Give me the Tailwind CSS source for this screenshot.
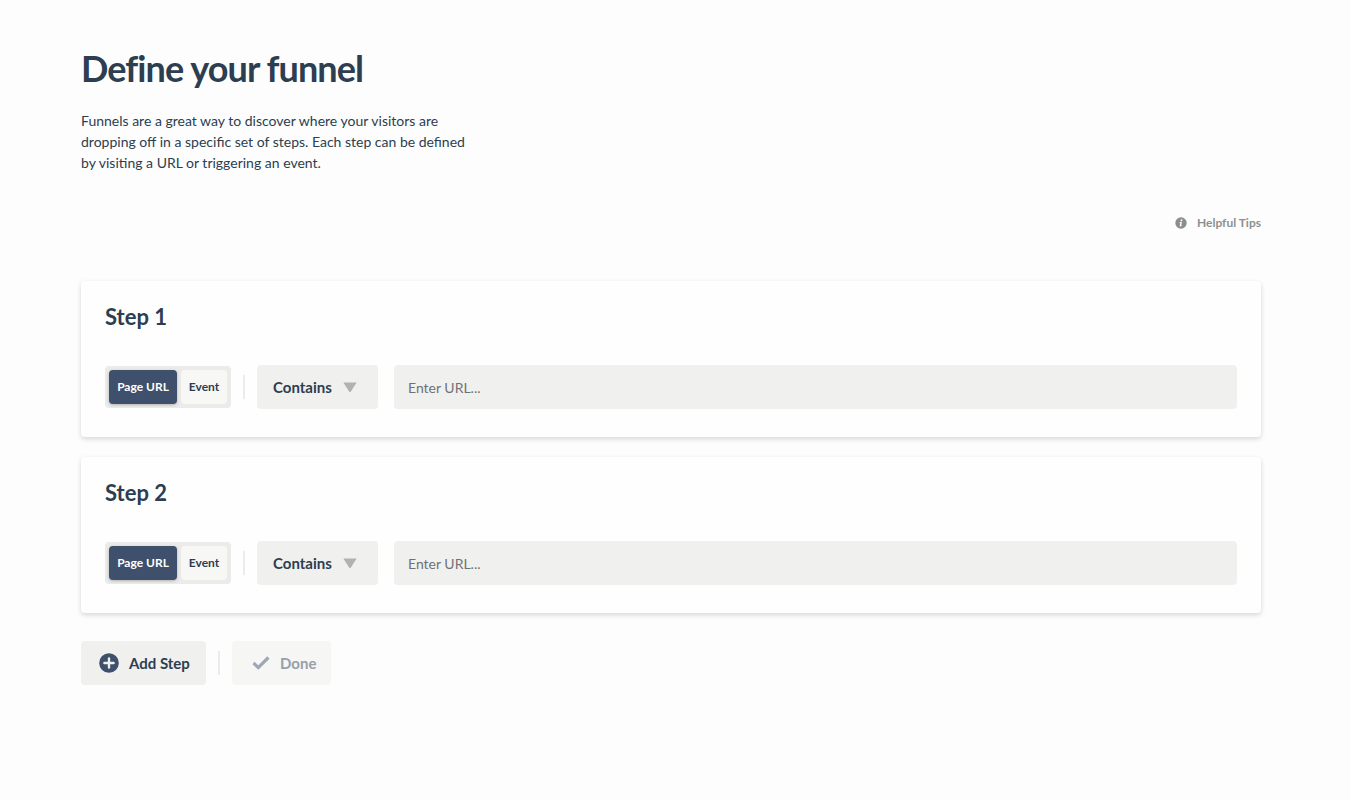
<!DOCTYPE html>
<html lang="en">
<head>
  <meta charset="UTF-8" />
  <meta name="viewport" content="width=device-width, initial-scale=1.0" />
  <title>Define your funnel</title>
  <script src="https://cdn.jsdelivr.net/npm/@tailwindcss/browser@4"></script>
</head>
<body class="bg-[#fdfdfd] text-[#2c3e50] min-h-screen font-['Lato',sans-serif]">

  <main class="pl-[81px] pr-[89px] pt-11 pb-16">

    <!-- Intro -->
    <header>
      <h1 class="text-[36px] leading-[48px] font-bold tracking-tight">Define your funnel</h1>
      <p class="mt-[18px] max-w-[410px] text-[14px] leading-[21px]">
        Funnels are a great way to discover where your visitors are<br>
        dropping off in a specific set of steps. Each step can be defined<br>
        by visiting a URL or triggering an event.
      </p>
    </header>

    <div class="mt-10 flex justify-end">
      <a href="#" class="flex items-center gap-[10px] text-[12px] leading-5 font-bold text-[#8c918f]">
        <svg class="w-3 h-3" viewBox="0 0 12 12" aria-hidden="true">
          <circle cx="6" cy="6" r="5.7" fill="#8a8f8d" />
          <circle cx="6.5" cy="3.2" r="1" fill="#fdfdfd" />
          <path d="M4.7 5h2.2L6.2 8.4h.7l-.2.9H4.6l.7-3.4h-.8z" fill="#fdfdfd" />
        </svg>
        Helpful Tips
      </a>
    </div>

    <!-- Steps -->
    <div class="mt-12 flex flex-col gap-5">
      <section class="bg-[#fefefe] rounded px-6 pt-5 pb-7 shadow-[0_2px_5px_rgba(0,0,0,0.16)]">
        <h2 class="text-[22px] leading-8 font-bold">Step 1</h2>
        <div class="mt-8 flex items-center">
          <div class="flex gap-1 p-1 rounded bg-[#ebebe9] text-[12px] font-bold" role="group" aria-label="Step 1 type">
            <button type="button" aria-pressed="true" class="w-[68px] h-[34px] rounded bg-[#3e506c] text-white shadow-[0_1px_3px_rgba(0,0,0,0.25)]">Page URL</button>
            <button type="button" aria-pressed="false" class="w-[46px] h-[34px] rounded bg-[#f7f7f6]">Event</button>
          </div>
          <div class="mx-3 w-0.5 h-6 bg-[#ebebe9]"></div>
          <div class="relative">
            <select aria-label="Step 1 match" class="appearance-none w-[121px] h-11 pl-4 rounded bg-[#f0f0ee] text-[15px] font-bold">
              <option>Contains</option>
              <option>Equals</option>
            </select>
            <svg class="absolute right-[21px] top-[17px] w-[14px] h-[11px] pointer-events-none" viewBox="0 0 14 11" aria-hidden="true">
              <path d="M1.2.5h11.6q.9 0 .4.8L7.9 9.6q-.9 1-1.8 0L.8 1.3Q.3.5 1.2.5z" fill="#b2b3b1" />
            </svg>
          </div>
          <input type="text" aria-label="Step 1 URL" placeholder="Enter URL..." class="ml-4 flex-1 min-w-0 h-11 px-[14px] rounded bg-[#f0f0ee] text-[14px] placeholder:text-[#6f7275]" />
        </div>
      </section>

      <section class="bg-[#fefefe] rounded px-6 pt-5 pb-7 shadow-[0_2px_5px_rgba(0,0,0,0.16)]">
        <h2 class="text-[22px] leading-8 font-bold">Step 2</h2>
        <div class="mt-8 flex items-center">
          <div class="flex gap-1 p-1 rounded bg-[#ebebe9] text-[12px] font-bold" role="group" aria-label="Step 2 type">
            <button type="button" aria-pressed="true" class="w-[68px] h-[34px] rounded bg-[#3e506c] text-white shadow-[0_1px_3px_rgba(0,0,0,0.25)]">Page URL</button>
            <button type="button" aria-pressed="false" class="w-[46px] h-[34px] rounded bg-[#f7f7f6]">Event</button>
          </div>
          <div class="mx-3 w-0.5 h-6 bg-[#ebebe9]"></div>
          <div class="relative">
            <select aria-label="Step 2 match" class="appearance-none w-[121px] h-11 pl-4 rounded bg-[#f0f0ee] text-[15px] font-bold">
              <option>Contains</option>
              <option>Equals</option>
            </select>
            <svg class="absolute right-[21px] top-[17px] w-[14px] h-[11px] pointer-events-none" viewBox="0 0 14 11" aria-hidden="true">
              <path d="M1.2.5h11.6q.9 0 .4.8L7.9 9.6q-.9 1-1.8 0L.8 1.3Q.3.5 1.2.5z" fill="#b2b3b1" />
            </svg>
          </div>
          <input type="text" aria-label="Step 2 URL" placeholder="Enter URL..." class="ml-4 flex-1 min-w-0 h-11 px-[14px] rounded bg-[#f0f0ee] text-[14px] placeholder:text-[#6f7275]" />
        </div>
      </section>
    </div>

    <!-- Actions -->
    <div class="mt-7 flex items-center text-[15px] font-bold">
      <button type="button" class="flex items-center gap-[10px] w-[125px] h-11 pl-[18px] rounded bg-[#f0f0ee] whitespace-nowrap">
        <svg class="w-5 h-5 shrink-0" viewBox="0 0 20 20" aria-hidden="true">
          <circle cx="10" cy="10" r="9.8" fill="#3e506c" />
          <path d="M10 5.4v9.2M5.4 10h9.2" fill="none" stroke="#f0f0ee" stroke-width="2.4" stroke-linecap="round" />
        </svg>
        Add Step
      </button>
      <div class="mx-3 w-0.5 h-6 bg-[#ebebe9]"></div>
      <button type="button" disabled class="flex items-center gap-[10px] w-[99px] h-11 pl-5 rounded bg-[#f6f6f5] text-[#989fa9]">
        <svg class="w-[18px] h-[14px] shrink-0" viewBox="0 0 18 14" aria-hidden="true">
          <path d="M1.5 7L6.3 11.6L16.4 1.5" fill="none" stroke="#9ea7b5" stroke-width="3.2" />
        </svg>
        Done
      </button>
    </div>

  </main>

</body>
</html>
